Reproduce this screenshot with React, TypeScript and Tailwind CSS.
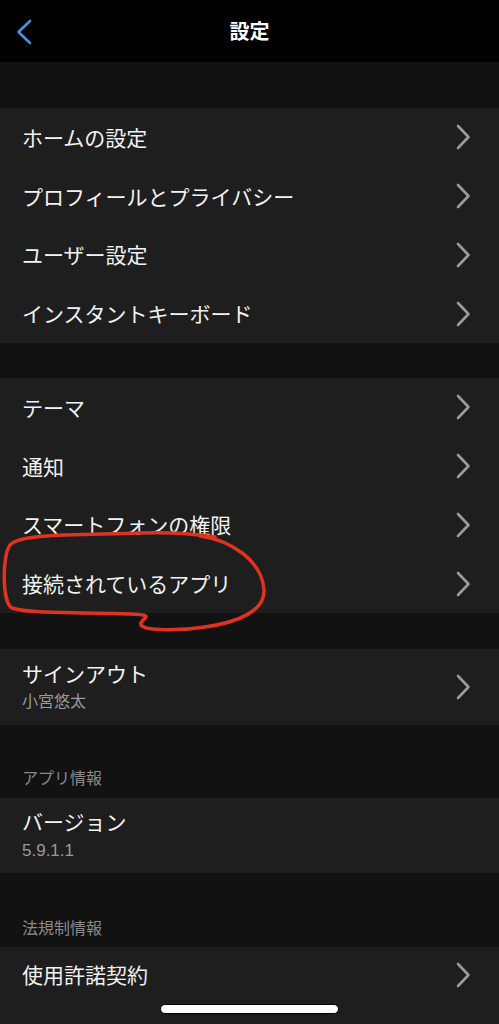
import React from "react";

const Chevron = () => (
  <svg width="16" height="26" viewBox="0 0 16 26" className="shrink-0">
    <path d="M3 2 L13.5 13 L3 24" fill="none" stroke="#9b9b9b" strokeWidth="2.6" strokeLinecap="round" strokeLinejoin="round" />
  </svg>
);

const Row = ({ label }: { label: string }) => (
  <div className="flex h-[58.75px] items-center justify-between pl-[22px] pr-[28px]">
    <span className="text-[21px] leading-none text-[#f2f2f2]">{label}</span>
    <Chevron />
  </div>
);

export default function App() {
  return (
    <div
      className="relative h-[1024px] w-[499px] overflow-hidden bg-[#121212]"
      style={{ fontFamily: '"Noto Sans CJK JP", "Noto Sans", sans-serif' }}
    >
      {/* header */}
      <div className="relative flex h-[62px] items-center justify-center bg-black">
        <svg width="20" height="28" viewBox="0 0 20 28" className="absolute left-[14px] top-[18px]">
          <path d="M16 3 L4.5 14 L16 25" fill="none" stroke="#4a8fe0" strokeWidth="2.6" strokeLinecap="round" strokeLinejoin="round" />
        </svg>
        <span className="text-[20px] font-bold text-white">設定</span>
      </div>

      <div className="h-[46px]" />
      <div className="bg-[#1e1e1e]">
        <Row label="ホームの設定" />
        <Row label="プロフィールとプライバシー" />
        <Row label="ユーザー設定" />
        <Row label="インスタントキーボード" />
      </div>

      <div className="h-[35px]" />
      <div className="bg-[#1e1e1e]">
        <Row label="テーマ" />
        <Row label="通知" />
        <Row label="スマートフォンの権限" />
        <Row label="接続されているアプリ" />
      </div>

      <div className="h-[36px]" />
      <div className="flex h-[76px] items-center justify-between bg-[#1e1e1e] pl-[22px] pr-[28px]">
        <div className="-mt-[3px] flex flex-col gap-[8px]">
          <span className="text-[21px] leading-none text-[#f2f2f2]">サインアウト</span>
          <span className="text-[16px] leading-none text-[#9a9a9a]">小宮悠太</span>
        </div>
        <Chevron />
      </div>

      <div className="flex h-[73px] items-end pb-[13px] pl-[22px]">
        <span className="text-[16px] leading-none text-[#8a8a8a]">アプリ情報</span>
      </div>
      <div className="flex h-[75px] flex-col justify-center gap-[10px] bg-[#1e1e1e] pl-[22px]">
        <span className="-mt-[2px] text-[21px] leading-none text-[#f2f2f2]">バージョン</span>
        <span className="text-[17px] leading-none text-[#9a9a9a]" style={{ fontFamily: '"Liberation Sans", sans-serif' }}>5.9.1.1</span>
      </div>

      <div className="flex h-[74px] items-end pb-[12px] pl-[22px]">
        <span className="text-[16px] leading-none text-[#8a8a8a]">法規制情報</span>
      </div>
      <div className="flex h-[80px] items-start justify-between bg-[#1e1e1e] pl-[22px] pr-[28px] pt-[17px]">
        <span className="text-[21px] leading-none text-[#f2f2f2]">使用許諾契約</span>
        <div className="-mt-[2px]">
          <Chevron />
        </div>
      </div>

      {/* home indicator */}
      <div className="absolute left-[160px] top-[1004px] h-[10px] w-[179px] rounded-full border border-black bg-white" />

      {/* red annotation */}
      <svg className="pointer-events-none absolute left-0 top-0" width="499" height="1024" viewBox="0 0 499 1024">
        <path
          d="M 200 536 C 230 540, 262 560, 264 590 C 265 610, 240 622, 205 627 C 180 631, 145 631, 141 625 C 138 619, 160 615, 130 614 C 80 612, 30 614, 12 608 C 2 603, 2 555, 10 545 C 20 533, 80 535, 140 533 C 170 532, 190 533, 215 537"
          fill="none"
          stroke="#e0321f"
          strokeWidth="3.5"
          strokeLinecap="round"
          strokeLinejoin="round"
        />
      </svg>
    </div>
  );
}
